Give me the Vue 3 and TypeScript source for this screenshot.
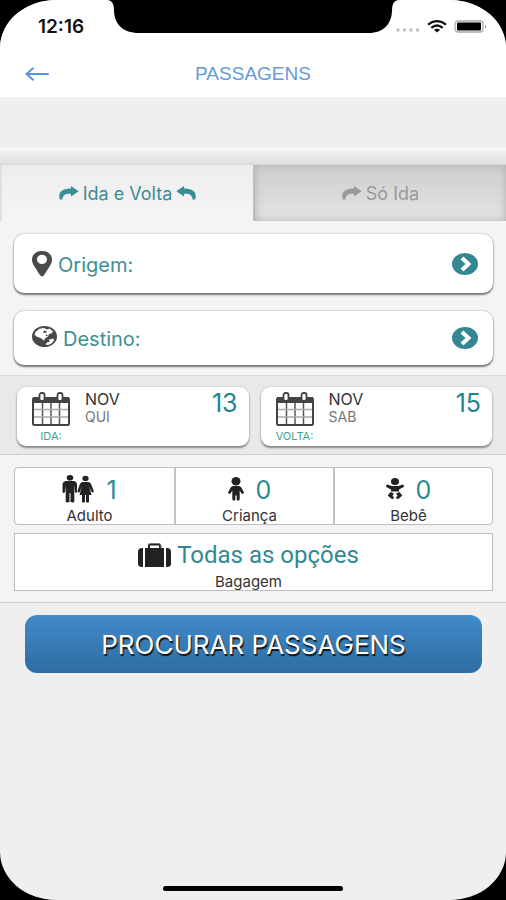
<script setup lang="ts">
import { ref } from 'vue'

type Trip = 'round' | 'oneway'
type PaxIcon = 'adult' | 'child' | 'baby'

interface Leg {
  label: string
  month: string
  weekday: string
  day: number
}

interface Passenger {
  icon: PaxIcon
  label: string
  count: number
}

const trip = ref<Trip>('round')

const legs: Leg[] = [
  { label: 'IDA:', month: 'NOV', weekday: 'QUI', day: 13 },
  { label: 'VOLTA:', month: 'NOV', weekday: 'SAB', day: 15 },
]

const passengers = ref<Passenger[]>([
  { icon: 'adult', label: 'Adulto', count: 1 },
  { icon: 'child', label: 'Criança', count: 0 },
  { icon: 'baby', label: 'Bebê', count: 0 },
])
</script>

<template>
  <div class="phone">
    <svg class="notch" width="290" height="34" viewBox="0 0 290 34" aria-hidden="true">
      <path d="M0 0H290Q284 1 284 10C284 24 275 33 261 33H31C15 33 6 24 6 10Q6 1 0 0Z" />
    </svg>

    <header class="top">
      <div class="status">
        <span class="clock">12:16</span>
        <div class="signals">
          <svg width="24" height="4" viewBox="0 0 24 4" fill="#bdbdbd" aria-hidden="true">
            <circle cx="2" cy="2" r="1.7" /><circle cx="8.500" cy="2" r="1.7" />
            <circle cx="15" cy="2" r="1.7" /><circle cx="21.500" cy="2" r="1.7" />
          </svg>
          <svg class="wifi" width="20" height="13" viewBox="0 0 20 13" fill="none" stroke="#111" stroke-width="2.2" aria-hidden="true">
            <path d="M1 4.600Q10-2.400 19 4.600M4.300 7.800Q10 3.200 15.700 7.800" />
            <path d="M10 12.500L6.900 9.700Q10 7.700 13.100 9.700Z" fill="#111" stroke="none" />
          </svg>
          <svg width="34" height="13" viewBox="0 0 34 13" aria-hidden="true">
            <rect x="1" y="1" width="28" height="11" rx="3" fill="#fff" stroke="#aaa" stroke-width="1.300" />
            <rect x="3" y="2.500" width="24" height="8" rx="1" fill="#000" />
            <path d="M31 4.500Q33.500 6.500 31 8.500Z" fill="#999" />
          </svg>
        </div>
      </div>
      <nav class="navbar">
        <button class="back" type="button" aria-label="Voltar">
          <svg width="24" height="14" viewBox="0 0 24 14" fill="none" stroke="#5b93da" stroke-width="2" stroke-linecap="round" stroke-linejoin="round" aria-hidden="true">
            <path d="M23 7H1.500M8 1.300L1.500 7L8 12.700" />
          </svg>
        </button>
        <h1>PASSAGENS</h1>
      </nav>
    </header>

    <div class="spacer"></div>

    <div class="tabs">
      <button type="button" class="tab" :class="{ active: trip === 'round' }" @click="trip = 'round'">
        <svg width="20" height="14" viewBox="0 0 20 14" aria-hidden="true">
          <path d="M.8 13.500C-1.500 5.500 4 2.600 12 2.600V0L19.700 5.200L12 10.400V7.900C7 7.300 3.800 8.800 3.400 13.500Z" />
        </svg>
        <span>Ida e Volta</span>
        <svg width="20" height="14" viewBox="0 0 20 14" aria-hidden="true">
          <path d="M19.200 13.500C21.500 5.500 16 2.600 8 2.600V0L.3 5.200L8 10.400V7.900C13 7.300 16.200 8.800 16.600 13.500Z" />
        </svg>
      </button>
      <button type="button" class="tab" :class="{ active: trip === 'oneway' }" @click="trip = 'oneway'">
        <svg width="20" height="14" viewBox="0 0 20 14" aria-hidden="true">
          <path d="M.8 13.500C-1.500 5.500 4 2.600 12 2.600V0L19.700 5.200L12 10.400V7.900C7 7.300 3.800 8.800 3.400 13.500Z" />
        </svg>
        <span>Só Ida</span>
      </button>
    </div>

    <main>
      <section class="places">
        <button type="button" class="place origin">
          <svg width="20" height="26" viewBox="0 0 20 26" aria-hidden="true">
            <path fill="#4a4a4a" fill-rule="evenodd" d="M10 0C4 0 0 3.600 0 8.700C0 12 1.700 14 3.400 17L8 24.300Q10 26.600 12 24.300L16.600 17C18.300 14 20 12 20 8.700C20 3.600 16 0 10 0ZM10 3.700A5 4.700 0 1 1 10 13.100A5 4.700 0 1 1 10 3.700Z" />
          </svg>
          <span class="place-name">Origem:</span>
          <svg class="go" width="26" height="22" viewBox="0 0 26 22" aria-hidden="true">
            <ellipse cx="13" cy="11" rx="13" ry="11" fill="#358791" />
            <path d="M10 5L16.500 11L10 17" fill="none" stroke="#fff" stroke-width="4" />
          </svg>
        </button>
        <button type="button" class="place">
          <svg class="globe" width="25" height="21" viewBox="0 0 25 21" aria-hidden="true">
            <ellipse cx="12.500" cy="10.500" rx="12.500" ry="10.500" fill="#484848" />
            <path fill="#fff" d="M3.500 6L7.500 2.800L12 2L15 3.500L17.500 2.500L21 5.500L19.500 7.500L17 8L16 10.500L13.500 12L12 14.500L8.500 12L4.500 10.500L2.500 8.500ZM17 13.500L21.500 12.500L22 14.500L19.500 17.500L16 19L13.500 18.500L15 16.500L17.500 16Z" />
            <path fill="#484848" d="M12 4.500L15 5.500L14 7L11 6.500ZM13.500 8.500L16 9L14.500 10.500Z" />
          </svg>
          <span class="place-name">Destino:</span>
          <svg class="go" width="26" height="22" viewBox="0 0 26 22" aria-hidden="true">
            <ellipse cx="13" cy="11" rx="13" ry="11" fill="#358791" />
            <path d="M10 5L16.500 11L10 17" fill="none" stroke="#fff" stroke-width="4" />
          </svg>
        </button>
      </section>

      <section class="dates">
        <button v-for="leg in legs" :key="leg.label" type="button" class="date">
          <span class="cal">
            <svg width="38" height="34" viewBox="0 0 38 34" aria-hidden="true">
              <rect x="1" y="6" width="36" height="27" rx="1.500" fill="#fff" stroke="#444" stroke-width="2" />
              <path d="M1 5H37V11H1Z" fill="#444" />
              <path d="M10.500 11V32M19 11V32M27.500 11V32" stroke="#555" stroke-width="1.500" />
              <path d="M2 17.500H36M2 25H36" stroke="#aaa" stroke-width="1.500" />
              <rect x="7.500" y="1" width="5" height="8" rx="2" fill="#fff" stroke="#444" stroke-width="1.800" />
              <rect x="25.500" y="1" width="5" height="8" rx="2" fill="#fff" stroke="#444" stroke-width="1.800" />
            </svg>
            <span class="leg">{{ leg.label }}</span>
          </span>
          <span class="when">
            <span class="month">{{ leg.month }}</span>
            <span class="weekday">{{ leg.weekday }}</span>
          </span>
          <span class="day">{{ leg.day }}</span>
        </button>
      </section>

      <section class="options">
        <div class="pax">
          <button v-for="p in passengers" :key="p.label" type="button" class="cell">
            <span class="value">
              <svg v-if="p.icon === 'adult'" width="32" height="28" viewBox="0 0 32 28" fill="#222" aria-hidden="true">
                <ellipse cx="8" cy="2.800" rx="3.300" ry="2.800" />
                <path d="M4 6H12Q15 6.500 15 10V17Q14 19 13 17L12.300 10V26.500Q12 28 8.500 27V18H7.500V27Q4 28 3.700 26.500V10L3 17Q1.500 19 .5 17V10Q.5 6.500 4 6Z" />
                <ellipse cx="23.500" cy="3.500" rx="3.100" ry="2.700" />
                <path d="M20.500 7H26.500Q28.500 7.300 29.300 9.500L31.700 16Q31.500 18.500 29.500 17L27 11L29.500 20H27V27Q26 28 24 27V20H23V27Q21 28 20 27V20H17.500L20 11L17.800 17Q15.800 18.500 15.500 16L17.700 9.500Q18.500 7.300 20.500 7Z" />
              </svg>
              <svg v-else-if="p.icon === 'child'" width="16" height="24" viewBox="0 0 16 24" fill="#222" aria-hidden="true">
                <ellipse cx="8" cy="4.200" rx="4.500" ry="4.200" />
                <path d="M5 9H11Q12.500 9.200 13.300 10.500L16 15.500Q15.500 17.500 13.500 16.500L11.700 13.500V22.500Q10.500 24.500 8.700 23V18.500H7.300V23Q5.500 24.500 4.300 22.500V13.500L2.500 16.500Q.5 17.500 0 15.500L2.700 10.500Q3.500 9.200 5 9Z" />
              </svg>
              <svg v-else width="18" height="21" viewBox="0 0 18 21" fill="#222" aria-hidden="true">
                <ellipse cx="9" cy="3.500" rx="4" ry="3.500" />
                <path d="M1.500 6.500L5.500 8H12.500L16.500 6.500Q18.500 7 17.700 9L13 11.500V13.500H5V11.500L.3 9Q-.5 7 1.500 6.500Z" />
                <path d="M4.500 14L8 15.500L6.500 17.500L8 20Q7 21.500 5 20.500L1.700 17.500ZM13.500 14L10 15.500L11.500 17.500L10 20Q11 21.500 13 20.500L16.300 17.500Z" />
              </svg>
              <span class="count">{{ p.count }}</span>
            </span>
            <span class="caption">{{ p.label }}</span>
          </button>
        </div>
        <button type="button" class="cell baggage">
          <span class="value">
            <svg width="33" height="24" viewBox="0 0 33 24" fill="#222" aria-hidden="true">
              <path d="M5 5V24H4Q0 24 0 20.500V9Q0 5 4 5ZM28 5V24H29Q33 24 33 20.500V9Q33 5 29 5Z" />
              <path fill-rule="evenodd" d="M7 5H10V2.500Q10 .5 12.500 .5H20.500Q23 .5 23 2.500V5H26V24H7ZM12 5H21V2.500H12Z" />
              <path d="M10 2.500Q10 .5 12.500 .5H20.500Q23 .5 23 2.500V5" fill="none" stroke="#777" stroke-width="1" />
            </svg>
            <span class="choice">Todas as opções</span>
          </span>
          <span class="caption">Bagagem</span>
        </button>
      </section>

      <div class="action">
        <button type="button" class="search">PROCURAR PASSAGENS</button>
      </div>
    </main>

    <div class="home-bar"></div>
  </div>
</template>

<style>
body {
  margin: 0;
  background: #000;
}
</style>

<style scoped>
.phone {
  position: relative;
  display: flex;
  flex-direction: column;
  box-sizing: border-box;
  min-height: 100vh;
  overflow: hidden;
  border-radius: 56px / 48px;
  background: #efefef;
  font-family: Inter, Roboto, sans-serif;
  color: #333;
}
button {
  margin: 0;
  padding: 0;
  border: 0;
  background: none;
  color: inherit;
  font: inherit;
  cursor: pointer;
}
svg {
  display: block;
  flex: none;
}
.notch {
  position: absolute;
  top: 0;
  left: 50%;
  transform: translateX(-50%);
}
.top {
  background: #fff;
}
.status {
  display: flex;
  align-items: center;
  justify-content: space-between;
  height: 52px;
  padding: 0 18px 0 38px;
}
.clock {
  font-size: 19px;
  font-weight: 600;
  color: #111;
}
.signals {
  display: flex;
  align-items: center;
  gap: 7px;
}
.signals svg:first-child {
  margin-top: 8px;
}
.navbar {
  display: grid;
  grid-template-columns: 1fr auto 1fr;
  align-items: center;
  height: 43px;
  padding: 0 25px 2px;
}
.back {
  justify-self: start;
}
h1 {
  margin: 0;
  font: 400 19px/40px "Liberation Sans", sans-serif;
  color: #6699d8;
}
.spacer {
  height: 68px;
  background: linear-gradient(#f3f3f3 0, #efefef 6px, #efefef 50px, #f7f7f7 52px, #ececec 56px, #e2e2e2 66px, #d4d4d4 68px);
}
.tabs {
  display: grid;
  grid-template-columns: 1fr 1fr;
}
.tab {
  display: flex;
  align-items: center;
  justify-content: center;
  gap: 4px;
  height: 56px;
  border-left: 2px solid #bdbdbd;
  background: linear-gradient(#cecece, #e4e4e4);
  box-shadow: inset 0 0 8px #b0b0b0;
  font-size: 18px;
  color: #999;
}
.tab svg {
  fill: currentColor;
}
.tab.active {
  border-left-color: #e0e0e0;
  background: linear-gradient(#ededed, #f5f5f5);
  box-shadow: none;
  color: #3a8d92;
}
.places {
  display: flex;
  flex-direction: column;
  gap: 18px;
  padding: 13px 13px 10px 14px;
  background: #f4f4f4;
}
.place {
  display: flex;
  align-items: center;
  gap: 6px;
  height: 54px;
  padding: 0 15px 0 18px;
  border-radius: 10px;
  background: #fff;
  box-shadow: 0 2px 2px #777, 0 0 2px #999;
}
.origin {
  height: 59px;
}
.globe {
  margin-bottom: 4px;
}
.place-name {
  flex: 1;
  padding-top: 2px;
  font-size: 20px;
  text-align: left;
  color: #3d9096;
}
.dates {
  display: grid;
  grid-template-columns: 1fr 1fr;
  gap: 12px;
  padding: 11px 14px 8px 17px;
  border-top: 1px solid #dadada;
  border-bottom: 1px solid #cfcfcf;
  background: #e9e9e9;
}
.date {
  display: flex;
  align-items: flex-start;
  box-sizing: border-box;
  height: 59px;
  padding: 3px 11px 0 14px;
  border-radius: 9px;
  background: #fff;
  box-shadow: 0 2px 2px #888, 0 0 2px #aaa;
}
.cal {
  display: flex;
  flex-direction: column;
  align-items: center;
  width: 40px;
  padding-top: 2px;
}
.leg {
  font-size: 11px;
  line-height: 20px;
  color: #3f9f8d;
}
.when {
  display: flex;
  flex: 1;
  flex-direction: column;
  padding-left: 14px;
  text-align: left;
}
.month {
  font-size: 16px;
  line-height: 18px;
  color: #333;
}
.weekday {
  font-size: 14px;
  line-height: 18px;
  color: #777;
}
.day {
  font-size: 25px;
  line-height: 26px;
  color: #23858c;
}
.options {
  display: flex;
  flex-direction: column;
  gap: 8px;
  padding: 12px 13px 11px 14px;
  border-bottom: 1px solid #d0d0d0;
  background: #f4f4f4;
}
.pax {
  display: grid;
  grid-template-columns: repeat(3, 1fr);
  border: 1px solid #bdbdbd;
  border-radius: 4px;
  background: #fff;
}
.pax .cell + .cell {
  border-left: 2px solid #c2c2c2;
}
.cell {
  display: flex;
  flex-direction: column;
  align-items: center;
  height: 56px;
  padding-right: 10px;
}
.value {
  display: flex;
  align-items: center;
  justify-content: center;
  gap: 12px;
  height: 41px;
}
.count {
  padding-top: 2px;
  font-size: 25px;
  color: #2f8a92;
}
.caption {
  font-size: 15px;
  line-height: 14px;
  color: #333;
}
.baggage {
  box-sizing: border-box;
  height: 58px;
  border: 1px solid #bdbdbd;
  background: #fff;
}
.baggage .value {
  gap: 6px;
}
.choice {
  font: 400 24px/32px Roboto, sans-serif;
  color: #2f8a92;
}
.action {
  padding: 12px 24px 0 25px;
}
.search {
  width: 100%;
  height: 58px;
  border-radius: 12px;
  background: linear-gradient(#428bca, #2d6ca2);
  font-size: 26px;
  color: #fff;
  text-shadow: 1px 2px 1px #111;
}
.home-bar {
  width: 180px;
  height: 5px;
  margin: auto auto 9px;
  border-radius: 3px;
  background: #000;
}
</style>
